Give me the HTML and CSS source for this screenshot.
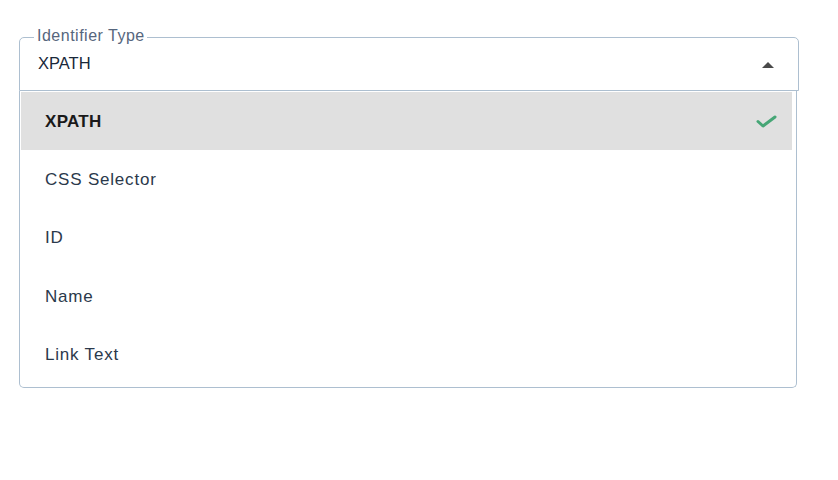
FILE: index.html
```html
<!DOCTYPE html>
<html lang="en">
<head>
<meta charset="utf-8">
<title>Identifier Type</title>
<link rel="stylesheet" href="styles.css">
</head>
<body>
<div class="page">
  <div class="field">
    <span class="field-label">Identifier Type</span>
    <div class="select">
      <span class="select-value">XPATH</span>
      <svg class="arrow" width="12" height="6" viewBox="0 0 12 6"><path d="M0 6 L6 0 L12 6 Z" fill="#4a4a4a"/></svg>
    </div>
    <ul class="menu">
      <li class="option selected">
        <span>XPATH</span>
        <svg class="check" width="21" height="13" viewBox="0 0 21 13"><path d="M2 6.5 L7 11 L19 2" fill="none" stroke="#46a676" stroke-width="3" stroke-linecap="round" stroke-linejoin="round"/></svg>
      </li>
      <li class="option"><span>CSS Selector</span></li>
      <li class="option"><span>ID</span></li>
      <li class="option"><span>Name</span></li>
      <li class="option"><span>Link Text</span></li>
    </ul>
  </div>
</div>
</body>
</html>
```

FILE: styles.css
```css
html, body {
  margin: 0;
  padding: 0;
  background: #ffffff;
}

body {
  font-family: "Liberation Sans", Arial, sans-serif;
}

.page {
  padding: 37px 39px 0 19px;
}

.field {
  position: relative;
  width: 780px;
}

.field-label {
  position: absolute;
  top: -11px;
  left: 15px;
  padding: 0 2px 0 3px;
  background: #ffffff;
  color: #56667d;
  font-size: 16px;
  line-height: 20px;
  letter-spacing: 0.5px;
}

.select {
  box-sizing: border-box;
  height: 54px;
  border: 1px solid #adbfd0;
  border-radius: 5px 5px 0 0;
  display: flex;
  align-items: center;
  justify-content: space-between;
  padding: 0 24px 0 18px;
}

.select-value {
  color: #19283a;
  font-size: 16.5px;
  line-height: 20px;
  margin-top: -2px;
}

.arrow {
  display: block;
  margin-top: 1px;
}

.menu {
  box-sizing: border-box;
  width: 778px;
  margin: 0;
  list-style: none;
  padding: 1px 4px 3px 1px;
  border: 1px solid #adbfd0;
  border-top: none;
  border-radius: 0 0 5px 5px;
}

.option {
  box-sizing: border-box;
  height: 58.4px;
  display: flex;
  align-items: center;
  justify-content: space-between;
  padding: 1px 15px 0 24px;
  color: #2b394b;
  font-size: 17px;
  line-height: 20px;
  letter-spacing: 0.8px;
}

.option.selected {
  background: #e0e0e0;
  color: #1a1a1a;
  font-weight: bold;
  letter-spacing: 0.3px;
}

.check {
  display: block;
}
```
